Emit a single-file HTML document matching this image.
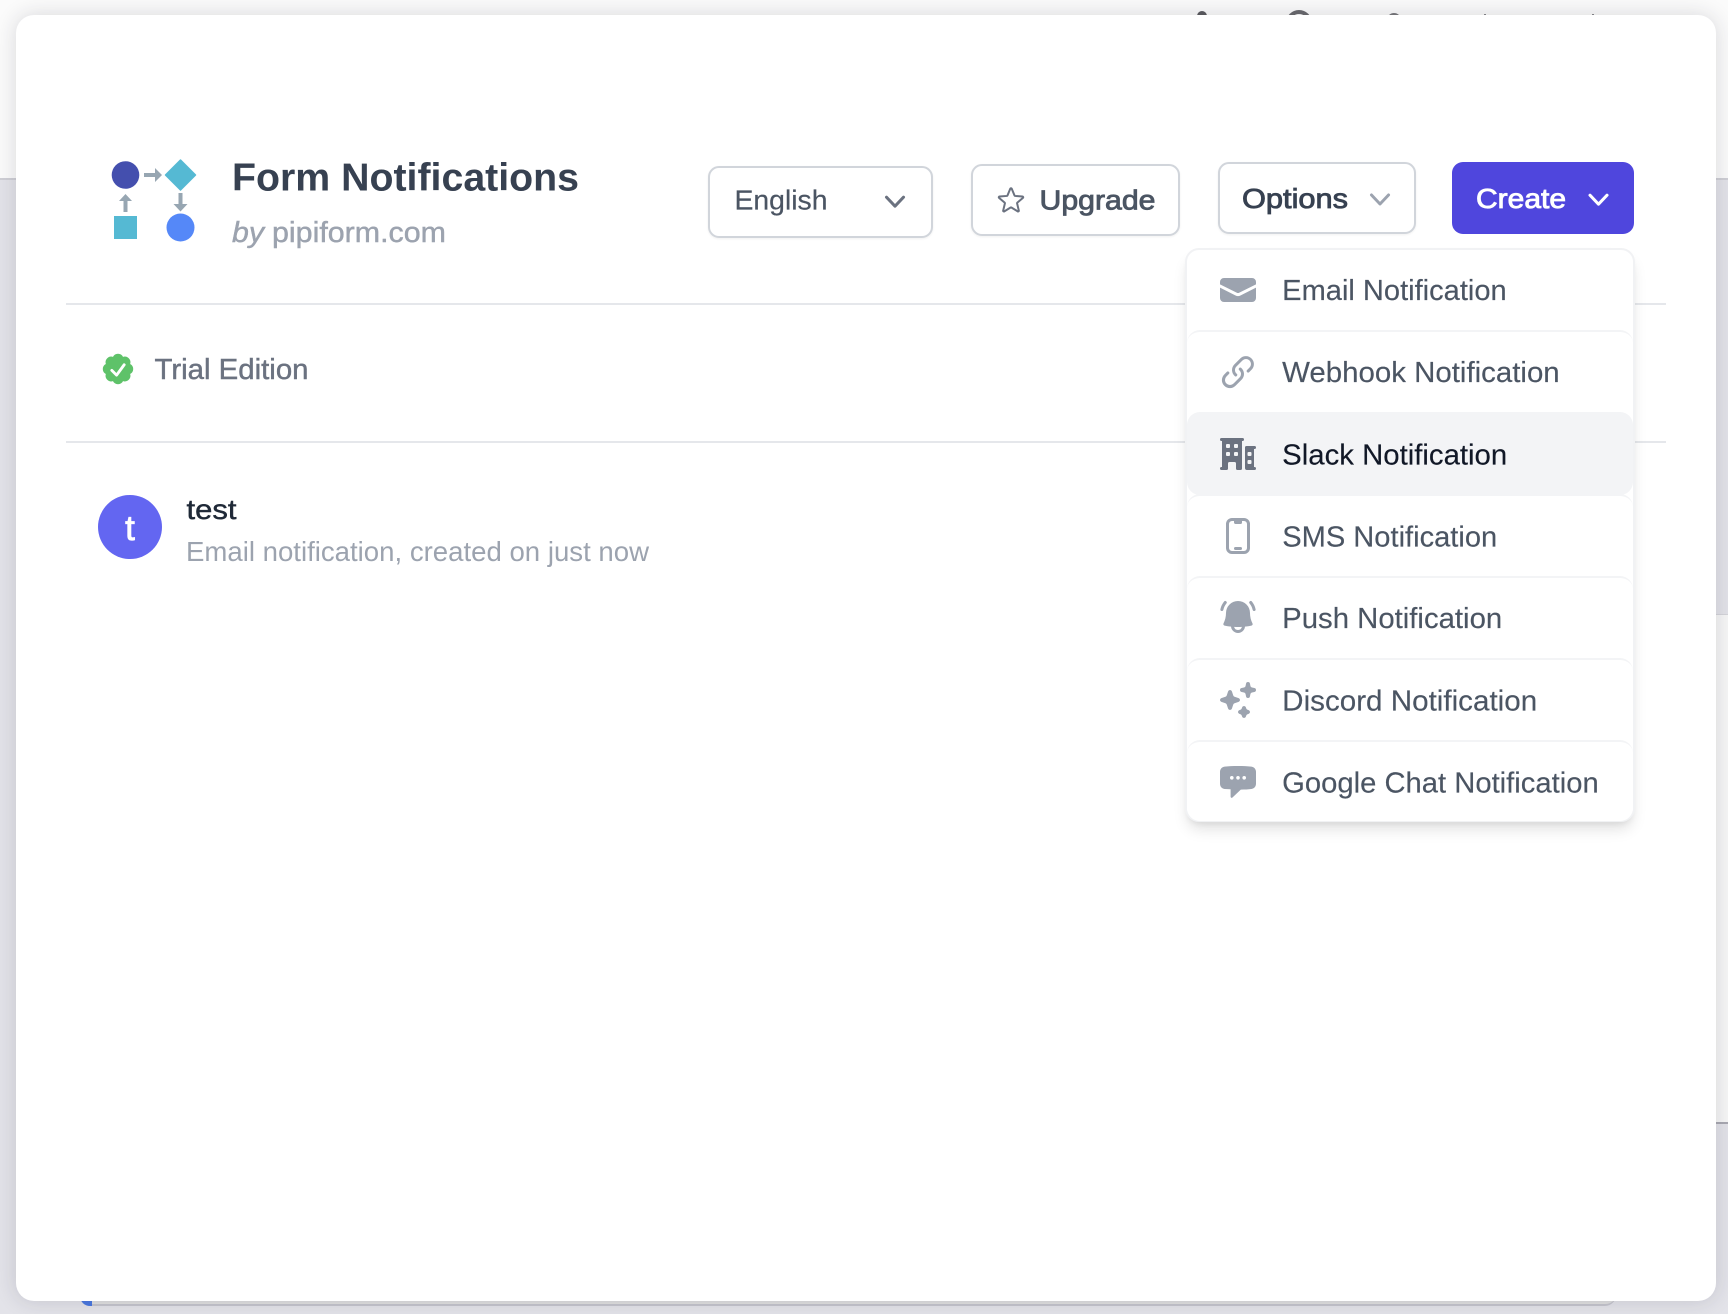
<!DOCTYPE html>
<html lang="en">
<head>
<meta charset="utf-8">
<title>Form Notifications</title>
<style>
html,body{margin:0;padding:0;width:1728px;height:1314px;overflow:hidden;background:#fbfbfb;font-family:"Liberation Sans",sans-serif}
.a{position:absolute;box-sizing:border-box}
#modal{left:16px;top:15px;width:1700px;height:1286px;background:#fff;border-radius:18px;box-shadow:0 0 22px rgba(30,30,50,.16)}
.btn{background:#fff;border:2px solid #d1d5db;border-radius:11px;box-shadow:0 1px 2px rgba(0,0,0,.06)}
.item{left:1187px;width:446px;height:83px;border-top:2px solid #f3f4f6;border-radius:13px;background:#fff}
svg{position:absolute;left:0;top:0}
text{font-family:"Liberation Sans",sans-serif;fill:currentColor;stroke:currentColor;stroke-width:0}
.m{stroke-width:.45}
.s{stroke-width:.85}
.menu{font-size:29px;color:#4b5563;stroke-width:.15}
</style>
</head>
<body>
<!-- backdrop -->
<div class="a" style="left:0;top:178px;width:1728px;height:1136px;background:#e3e3e9"></div>
<div class="a" style="left:0;top:178px;width:1728px;height:2px;background:#cfcfd5"></div>
<div class="a" style="left:1700px;top:614px;width:28px;height:508px;background:#f7f7f7;border-top:1px solid #d5d5da"></div>
<div class="a" style="left:1700px;top:1122px;width:28px;height:2px;background:#a9a9b2"></div>
<div class="a" style="left:92px;top:1295px;width:1524px;height:11px;background:#e0e0e0;border-bottom:2px solid #c6c6ce;border-radius:0 0 12px 0"></div>
<div class="a" style="left:80px;top:1295px;width:12px;height:11px;background:#4a78e0;border-radius:0 0 0 10px"></div>
<div class="a" style="left:1197px;top:11px;width:10px;height:10px;background:#5b5b5f;border-radius:50% 50% 0 0"></div>
<div class="a" style="left:1286px;top:10px;width:26px;height:26px;border:4px solid #6a6a6e;border-radius:50%"></div>
<div class="a" style="left:1387px;top:13px;width:14px;height:14px;border:3px solid #77777b;border-radius:50%"></div>
<div class="a" style="left:1484px;top:14px;width:2px;height:6px;background:#88888c"></div>
<div class="a" style="left:1592px;top:14px;width:2px;height:6px;background:#88888c"></div>

<div class="a" id="modal"></div>

<!-- dividers -->
<div class="a" style="left:66px;top:303px;width:1600px;height:2px;background:#e5e7eb"></div>
<div class="a" style="left:66px;top:441px;width:1600px;height:2px;background:#e5e7eb"></div>

<!-- buttons -->
<div class="a btn" style="left:708px;top:166px;width:225px;height:72px"></div>
<div class="a btn" style="left:971px;top:164px;width:209px;height:72px"></div>
<div class="a btn" style="left:1218px;top:162px;width:198px;height:72px"></div>
<div class="a" style="left:1452px;top:162px;width:182px;height:72px;background:#4f46dd;border-radius:11px"></div>

<!-- dropdown -->
<div class="a" style="left:1185px;top:248px;width:450px;height:574px;background:#fff;border:2px solid #f1f2f4;border-radius:14px;box-shadow:0 10px 15px -3px rgba(0,0,0,.12),0 4px 6px -2px rgba(0,0,0,.06)"></div>
<div class="a item" style="top:330px"></div>
<div class="a item" style="top:412px;background:#f3f4f6;border-top:0;border-radius:13px"></div>
<div class="a item" style="top:494px"></div>
<div class="a item" style="top:576px"></div>
<div class="a item" style="top:658px"></div>
<div class="a item" style="top:740px;height:81px"></div>

<svg width="1728" height="1314" viewBox="0 0 1728 1314" xmlns="http://www.w3.org/2000/svg">
  <!-- logo -->
  <circle cx="125.500" cy="175" r="13.800" fill="#444fae"/>
  <path d="M180.500 160 L195.500 175 L180.500 190 L165.500 175Z" fill="#55b9d3" stroke="#55b9d3" stroke-width="1.500" stroke-linejoin="round"/>
  <path d="M144 173 H155 V168 L162 175 L155 182 V177 H144Z" fill="#97a6b2"/>
  <path d="M123.500 212 V201 H119 L125.500 194 L132 201 H127.500 V212Z" fill="#97a6b2"/>
  <path d="M178.500 193 V204 H173.500 L180.500 211.500 L187.500 204 H182.500 V193Z" fill="#97a6b2"/>
  <rect x="114" y="216" width="23" height="23" fill="#55b9d3"/>
  <circle cx="180.500" cy="227.500" r="14" fill="#5588f8"/>

  <!-- title -->
  <text x="232" y="190.500" font-size="39" font-weight="700" textLength="347" lengthAdjust="spacingAndGlyphs" style="color:#374151">Form Notifications</text>
  <text x="232" y="242" font-size="29" font-style="italic" class="m" textLength="32" lengthAdjust="spacingAndGlyphs" style="color:#9ca3af">by</text>
  <text x="272" y="242" font-size="29" class="m" textLength="174" lengthAdjust="spacingAndGlyphs" style="color:#9ca3af">pipiform.com</text>

  <!-- trial -->
  <svg x="99" y="350" width="38" height="38" viewBox="0 0 20 20"><path fill="#5ec269" fill-rule="evenodd" d="M16.403 12.652a3 3 0 000-5.304 3 3 0 00-3.750-3.751 3 3 0 00-5.305 0 3 3 0 00-3.751 3.750 3 3 0 000 5.305 3 3 0 003.750 3.751 3 3 0 005.305 0 3 3 0 003.751-3.750zm-2.546-4.460a.75.75 0 00-1.214-.883l-3.483 4.790-1.880-1.880a.75.75 0 10-1.060 1.061l2.500 2.500a.75.75 0 001.137-.089l4-5.500z"/></svg>
  <text x="154.500" y="379" font-size="29" class="m" textLength="154" lengthAdjust="spacingAndGlyphs" style="color:#6b7280">Trial Edition</text>

  <!-- list row -->
  <circle cx="130" cy="527" r="32" fill="#6366f1"/>
  <text x="130" y="540" font-size="35" text-anchor="middle" class="s" style="color:#fff">t</text>
  <text x="186.500" y="519" font-size="28" class="m" textLength="50" lengthAdjust="spacingAndGlyphs" style="color:#1f2937">test</text>
  <text x="186" y="561" font-size="28" textLength="463" lengthAdjust="spacingAndGlyphs" style="color:#9ca3af">Email notification, created on just now</text>

  <!-- button contents -->
  <text x="734.500" y="209.500" font-size="28" textLength="93" lengthAdjust="spacingAndGlyphs" style="color:#4b5563;stroke-width:.2">English</text>
  <svg x="875" y="181.700" width="40" height="40" viewBox="0 0 20 20"><path fill="#6b7280" fill-rule="evenodd" d="M5.230 7.210a.75.75 0 011.060.020L10 11.168l3.710-3.938a.75.75 0 111.080 1.040l-4.250 4.500a.75.75 0 01-1.080 0l-4.250-4.500a.75.75 0 01.020-1.060z"/></svg>
  <svg x="995" y="184" width="32" height="32" viewBox="0 0 24 24"><path fill="none" stroke="#6b7280" stroke-width="1.500" stroke-linejoin="round" d="M11.480 3.499a.562.562 0 011.040 0l2.125 5.111a.563.563 0 00.475.345l5.518.442c.499.040.701.663.321.988l-4.204 3.602a.563.563 0 00-.182.557l1.285 5.385a.562.562 0 01-.840.610l-4.725-2.885a.562.562 0 00-.586 0L6.982 20.540a.562.562 0 01-.840-.610l1.285-5.386a.562.562 0 00-.182-.557l-4.204-3.602a.563.563 0 01.321-.988l5.518-.442a.563.563 0 00.475-.345L11.480 3.500z"/></svg>
  <text x="1039.500" y="209.500" font-size="28" class="s" textLength="116" lengthAdjust="spacingAndGlyphs" style="color:#4b5563">Upgrade</text>
  <text x="1242" y="208" font-size="28" class="s" textLength="106" lengthAdjust="spacingAndGlyphs" style="color:#374151">Options</text>
  <svg x="1360" y="179.500" width="40" height="40" viewBox="0 0 20 20"><path fill="#9ca3af" fill-rule="evenodd" d="M5.230 7.210a.75.75 0 011.060.020L10 11.168l3.710-3.938a.75.75 0 111.080 1.040l-4.250 4.500a.75.75 0 01-1.080 0l-4.250-4.500a.75.75 0 01.020-1.060z"/></svg>
  <text x="1476" y="208" font-size="28" class="s" textLength="90" lengthAdjust="spacingAndGlyphs" style="color:#fff">Create</text>
  <svg x="1578.500" y="179.700" width="40" height="40" viewBox="0 0 20 20"><path fill="#fff" fill-rule="evenodd" d="M5.230 7.210a.75.75 0 011.060.020L10 11.168l3.710-3.938a.75.75 0 111.080 1.040l-4.250 4.500a.75.75 0 01-1.080 0l-4.250-4.500a.75.75 0 01.020-1.060z"/></svg>

  <!-- menu icons -->
  <svg x="1218" y="270" width="40" height="40" viewBox="0 0 20 20" fill="#9ca3af"><path d="M3 4a2 2 0 00-2 2v1.161l8.441 4.221a1.250 1.250 0 001.118 0L19 7.162V6a2 2 0 00-2-2H3z"/><path d="M19 8.839l-7.770 3.885a2.750 2.750 0 01-2.460 0L1 8.839V14a2 2 0 002 2h14a2 2 0 002-2V8.839z"/></svg>
  <svg x="1218" y="352" width="40" height="40" viewBox="0 0 20 20" fill="#9ca3af"><path d="M12.232 4.232a2.500 2.500 0 013.536 3.536l-1.225 1.224a.75.75 0 001.061 1.060l1.224-1.224a4 4 0 00-5.656-5.656l-3 3a4 4 0 00.225 5.865.75.75 0 00.977-1.138 2.500 2.500 0 01-.142-3.667l3-3z"/><path d="M11.603 7.963a.75.75 0 00-.977 1.138 2.500 2.500 0 01.142 3.667l-3 3a2.500 2.500 0 01-3.536-3.536l1.225-1.224a.75.75 0 00-1.061-1.060l-1.224 1.224a4 4 0 105.656 5.656l3-3a4 4 0 00-.225-5.865z"/></svg>
  <svg x="1218" y="434" width="40" height="40" viewBox="0 0 20 20" fill="#6b7280"><path fill-rule="evenodd" d="M1 2.750A.75.75 0 011.750 2h10.500a.75.75 0 010 1.500H12v13.750a.75.75 0 01-.75.75h-1.500a.75.75 0 01-.75-.75v-2.500a.75.75 0 00-.75-.75h-2.500a.75.75 0 00-.75.75v2.500a.75.75 0 01-.75.75h-2.500a.75.75 0 010-1.500H2v-13h-.25A.75.75 0 011 2.750zM4 5.500a.5.5 0 01.5-.5h1a.5.5 0 01.5.5v1a.5.5 0 01-.5.5h-1a.5.5 0 01-.5-.5v-1zM4.500 9a.5.5 0 00-.5.5v1a.5.5 0 00.5.5h1a.5.5 0 00.5-.5v-1a.5.5 0 00-.5-.5h-1zM8 5.500a.5.5 0 01.5-.5h1a.5.5 0 01.5.5v1a.5.5 0 01-.5.5h-1a.5.5 0 01-.5-.5v-1zM8.500 9a.5.5 0 00-.5.5v1a.5.5 0 00.5.5h1a.5.5 0 00.5-.5v-1a.5.5 0 00-.5-.5h-1zM14.250 6a.75.75 0 00-.75.75V17a1 1 0 001 1h3.750a.75.75 0 000-1.500H18v-9h.25a.75.75 0 000-1.500h-4zm.5 3.500a.5.5 0 01.5-.5h1a.5.5 0 01.5.5v1a.5.5 0 01-.5.5h-1a.5.5 0 01-.5-.5v-1zm.5 3.500a.5.5 0 00-.5.5v1a.5.5 0 00.5.5h1a.5.5 0 00.5-.5v-1a.5.5 0 00-.5-.5h-1z"/></svg>
  <svg x="1218" y="516" width="40" height="40" viewBox="0 0 20 20" fill="#9ca3af"><path d="M8 16.250a.75.75 0 01.75-.75h2.500a.75.75 0 010 1.500h-2.500a.75.75 0 01-.75-.75z"/><path fill-rule="evenodd" d="M4 4a3 3 0 013-3h6a3 3 0 013 3v12a3 3 0 01-3 3H7a3 3 0 01-3-3V4zm4-1.500v.75c0 .414.336.75.75.75h2.500a.75.75 0 00.75-.75V2.500h1A1.500 1.500 0 0114.500 4v12a1.500 1.500 0 01-1.500 1.500H7A1.500 1.500 0 015.500 16V4A1.500 1.500 0 017 2.500h1z"/></svg>
  <svg x="1218" y="597" width="40" height="40" viewBox="0 0 20 20" fill="#9ca3af"><path d="M4.214 3.227a.75.75 0 00-1.156-.956 8.970 8.970 0 00-1.856 3.826.75.75 0 001.466.316 7.470 7.470 0 011.546-3.186zM16.942 2.271a.75.75 0 00-1.157.956 7.470 7.470 0 011.547 3.186.75.75 0 001.466-.316 8.971 8.971 0 00-1.856-3.826z"/><path fill-rule="evenodd" d="M10 2a6 6 0 00-6 6c0 1.887-.454 3.665-1.257 5.234a.75.75 0 00.515 1.076 32.940 32.940 0 003.256.508 3.500 3.500 0 006.972 0 32.933 32.933 0 003.256-.508.75.75 0 00.515-1.076A11.448 11.448 0 0116 8a6 6 0 00-6-6zm0 14.500a2 2 0 01-1.950-1.557 33.540 33.540 0 003.900 0A2 2 0 0110 16.500z"/></svg>
  <svg x="1218" y="680" width="40" height="40" viewBox="0 0 20 20" fill="#9ca3af"><path d="M15.980 1.804a1 1 0 00-1.960 0l-.24 1.192a1 1 0 01-.784.785l-1.192.238a1 1 0 000 1.962l1.192.238a1 1 0 01.785.785l.238 1.192a1 1 0 001.962 0l.238-1.192a1 1 0 01.785-.785l1.192-.238a1 1 0 000-1.962l-1.192-.238a1 1 0 01-.785-.785l-.238-1.192zM6.949 5.684a1 1 0 00-1.898 0l-.683 2.051a1 1 0 01-.633.633l-2.051.683a1 1 0 000 1.898l2.051.684a1 1 0 01.633.632l.683 2.051a1 1 0 001.898 0l.683-2.051a1 1 0 01.633-.633l2.051-.683a1 1 0 000-1.898l-2.051-.683a1 1 0 01-.633-.633L6.950 5.684zM13.949 13.684a1 1 0 00-1.898 0l-.184.551a1 1 0 01-.632.633l-.551.183a1 1 0 000 1.898l.551.183a1 1 0 01.633.633l.183.551a1 1 0 001.898 0l.184-.551a1 1 0 01.632-.633l.551-.183a1 1 0 000-1.898l-.551-.184a1 1 0 01-.633-.632l-.183-.551z"/></svg>
  <svg x="1218" y="762" width="40" height="40" viewBox="0 0 20 20"><path fill="#9ca3af" d="M3.300 2.300C7 1.900 13 1.900 16.700 2.300C18.100 2.500 19 3.600 19 5V10.800C19 12.200 18.100 13.300 16.700 13.500C15 13.700 13.500 13.800 11.400 13.800L7.300 17.700C6.900 18.100 6.300 17.900 6.300 17.300V13.600C5.300 13.600 4.300 13.600 3.300 13.500C1.900 13.300 1 12.200 1 10.800V5C1 3.600 1.900 2.500 3.300 2.300Z"/><circle cx="6.900" cy="7.900" r=".9" fill="#fff"/><circle cx="10" cy="7.900" r=".9" fill="#fff"/><circle cx="13.100" cy="7.900" r=".9" fill="#fff"/></svg>

  <!-- menu labels -->
  <text x="1282.200" y="300" class="menu" textLength="224.500" lengthAdjust="spacingAndGlyphs">Email Notification</text>
  <text x="1282.200" y="382" class="menu" textLength="277.500" lengthAdjust="spacingAndGlyphs">Webhook Notification</text>
  <text x="1282.200" y="464.500" class="menu" textLength="225" lengthAdjust="spacingAndGlyphs" style="color:#111827">Slack Notification</text>
  <text x="1282.200" y="546.500" class="menu" textLength="215" lengthAdjust="spacingAndGlyphs">SMS Notification</text>
  <text x="1282.200" y="628" class="menu" textLength="220" lengthAdjust="spacingAndGlyphs">Push Notification</text>
  <text x="1282.200" y="710.500" class="menu" textLength="255" lengthAdjust="spacingAndGlyphs">Discord Notification</text>
  <text x="1282.200" y="792.500" class="menu" textLength="316.500" lengthAdjust="spacingAndGlyphs">Google Chat Notification</text>
</svg>
</body>
</html>
